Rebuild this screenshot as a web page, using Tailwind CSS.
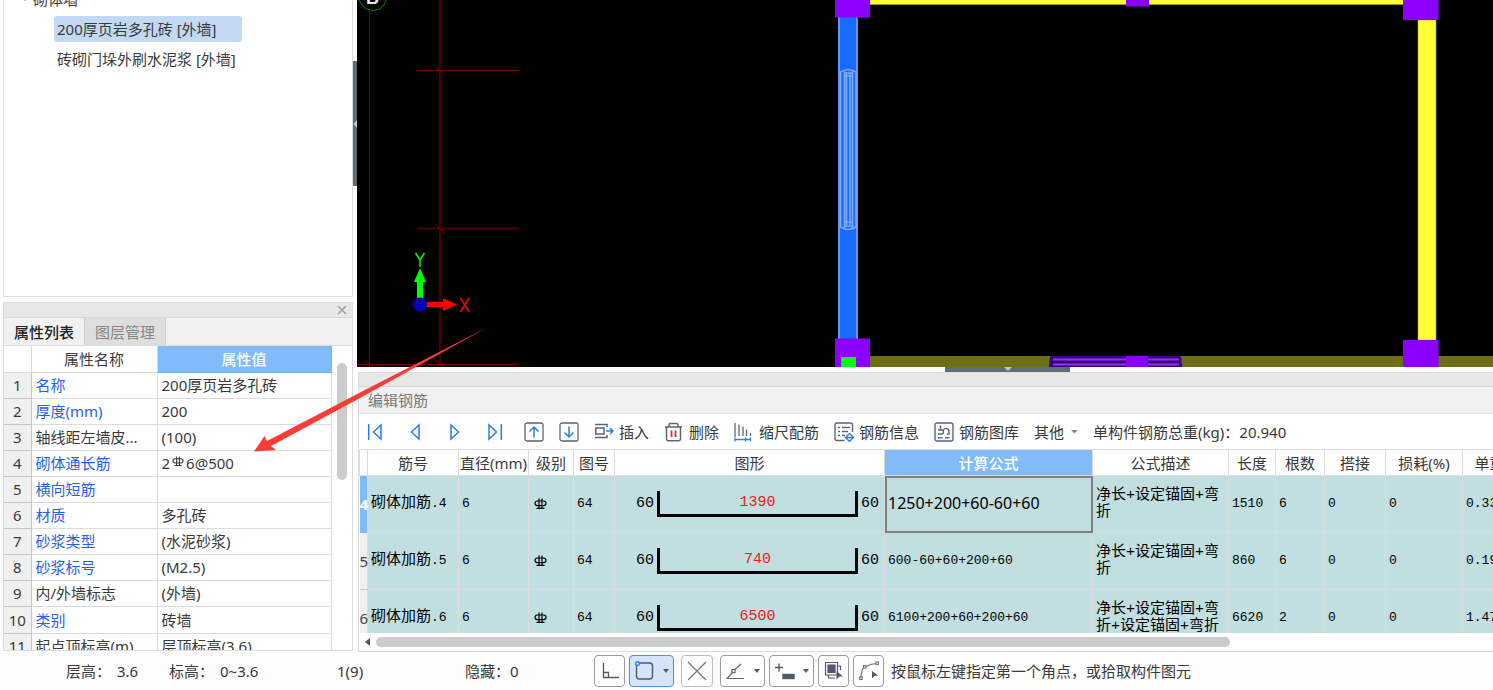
<!DOCTYPE html>
<html lang="zh-CN">
<head>
<meta charset="utf-8">
<title>编辑钢筋</title>
<script src="https://cdn.jsdelivr.net/npm/@tailwindcss/browser@4"></script>
</head>
<body class="relative flex h-screen flex-col overflow-hidden bg-white font-['Noto_Sans','Noto_Sans_CJK_SC',sans-serif] text-[15px] leading-5 text-[#3a3a3a]">

<svg class="hidden">
  <symbol id="rebar" viewBox="0 0 13 12">
    <g fill="none" stroke="currentColor" stroke-width="1.2">
      <path d="M6.500 3H3.400Q1 3 1 5.300Q1 7.600 3.400 7.600H9.600Q12 7.600 12 5.300Q12 3 9.600 3Z"/>
      <path d="M5 .5V10.400M8 .5V10.400M2.500 10.400H10.500"/>
    </g>
  </symbol>
</svg>

<main class="flex min-h-0 flex-1">
  <aside class="flex w-[353px] shrink-0 flex-col gap-[5px] pb-px pl-[3px]">
    <nav class="min-h-0 flex-1 overflow-hidden border border-t-0 border-[#dedede]">
      <ul class="-mt-4 whitespace-nowrap">
        <li class="flex h-[30px] items-center gap-1 pl-[17px]">
          <svg class="h-2 w-2" viewBox="0 0 8 8"><path d="M1 2H7L4 6Z" fill="#555"/></svg>砌体墙
        </li>
        <li class="flex h-[30px] items-center pl-[50px]">
          <a href="#" class="h-[26px] w-[188px] rounded-[3px] bg-[#c1d9f2] pl-[3px] leading-[26px]">200厚页岩多孔砖 [外墙]</a>
        </li>
        <li class="flex h-[30px] items-center pl-[53px]"><a href="#">砖砌门垛外刷水泥浆 [外墙]</a></li>
      </ul>
    </nav>

    <section class="flex h-[349px] shrink-0 flex-col overflow-hidden border border-[#dcdcdc]">
      <div class="flex h-[15px] shrink-0 items-center justify-end border-b border-[#d8d8d8] bg-[#e7e7e7] pr-[5px]">
        <button aria-label="关闭" class="block"><svg class="h-[10px] w-[10px]" viewBox="0 0 10 10"><path d="M1 1L9 9M9 1L1 9" stroke="#9a9a9a" stroke-width="1.200" fill="none"/></svg></button>
      </div>
      <div class="flex h-7 shrink-0 border-b border-[#dcdcdc] bg-[#f1f1f1]">
        <button class="w-[80px] font-medium text-[#222]">属性列表</button>
        <button class="w-[82px] border-x border-[#c9ced4] bg-[#dedede] text-[#858585]">图层管理</button>
      </div>
      <div class="flex min-h-0 flex-1 overflow-hidden">
        <table class="w-[327px] shrink-0 table-fixed self-start border-collapse whitespace-nowrap">
          <colgroup><col class="w-[27px]"><col class="w-[126px]"><col class="w-[174px]"></colgroup>
          <thead>
            <tr class="h-[26px]"><th class="border-r border-b border-[#d8d8d8]"></th><th class="border-r border-b border-[#d8d8d8] font-normal">属性名称</th><th class="border border-t-0 border-[#74b2f4] bg-[#80bbfb] font-medium text-white">属性值</th></tr>
          </thead>
          <tbody class="[&_td]:border [&_td]:border-[#dcdcdc] [&_td]:py-0 [&_td]:pl-1 [&_th]:border-r [&_th]:border-b [&_th]:border-[#c6c6c6] [&_th]:bg-[#f0f0f0] [&_th]:p-0 [&_th]:font-normal [&_tr]:h-[26px]">
            <tr><th>1</th><td class="text-[#1f62f5]">名称</td><td>200厚页岩多孔砖</td></tr>
            <tr><th>2</th><td class="text-[#1f62f5]">厚度(mm)</td><td>200</td></tr>
            <tr><th>3</th><td>轴线距左墙皮...</td><td>(100)</td></tr>
            <tr><th>4</th><td class="text-[#1f62f5]">砌体通长筋</td><td>2<svg class="mx-[2px] mb-[6px] inline h-[11px] w-3" role="img" aria-label="三级钢"><use href="#rebar"/></svg>6@500</td></tr>
            <tr><th>5</th><td class="text-[#1f62f5]">横向短筋</td><td></td></tr>
            <tr><th>6</th><td class="text-[#1f62f5]">材质</td><td>多孔砖</td></tr>
            <tr><th>7</th><td class="text-[#1f62f5]">砂浆类型</td><td>(水泥砂浆)</td></tr>
            <tr><th>8</th><td class="text-[#1f62f5]">砂浆标号</td><td>(M2.5)</td></tr>
            <tr><th>9</th><td>内/外墙标志</td><td>(外墙)</td></tr>
            <tr class="h-[27px]!"><th>10</th><td class="text-[#1f62f5]">类别</td><td>砖墙</td></tr>
            <tr><th>11</th><td>起点顶标高(m)</td><td>层顶标高(3.6)</td></tr>
          </tbody>
        </table>
        <div class="flex flex-1 justify-center pt-[17px]"><div class="h-[117px] w-[10px] rounded-full bg-[#cccccc]"></div></div>
      </div>
    </section>
  </aside>

  <div class="relative w-1 shrink-0">
    <button aria-label="收起左侧面板" class="absolute top-[61px] left-0 flex h-[125px] w-1 items-center bg-[#5f6b77]">
      <svg class="h-2 w-1" viewBox="0 0 4 8"><path d="M4 0V8L0.500 4Z" fill="#c4c8cc"/></svg>
    </button>
  </div>

  <div class="flex min-w-0 flex-1 flex-col">
    <div class="relative min-h-0 flex-1 overflow-hidden bg-black">
      <svg class="absolute inset-0 h-full w-full" viewBox="357 0 1136 367" preserveAspectRatio="xMinYMin slice" role="img" aria-label="墙体平面图">
        <!-- dimension lines -->
        <g stroke="#7a0000" fill="none">
          <path d="M369.500 11V367M418 70.500H519M357 364.500H519"/>
          <path d="M418 228.500H519" stroke="#500000" stroke-width="2"/>
          <path d="M440 0V364" stroke="#4a0000" stroke-width="2"/>
          <path d="M435 66L445 75M435 224L445 233M435 360L445 368M365 360L374 368" stroke="#8a0000"/>
        </g>
        <path d="M359 0L362 5L367 9L373 10.500L380 9L384 5L386 0" fill="none" stroke="#008a00"/>
        <text x="366" y="4" fill="#e8e8e8" font-size="18" font-weight="bold" font-family="Liberation Sans">B</text>
        <!-- coordinate axes -->
        <path d="M417 300V282H414L420 268L426 282H423V300Z" fill="#00ff00"/>
        <path d="M425 302H443V298L457 304.500L443 311V307H425Z" fill="#ff0000"/>
        <circle cx="420" cy="304.500" r="7" fill="#0000c0"/>
        <path d="M415.500 253L420 260L424.500 253M420 260V267" fill="none" stroke="#00ff00" stroke-width="1.500"/>
        <path d="M460.500 298L469 312M469 298L460.500 312" fill="none" stroke="#ff0000" stroke-width="1.500"/>
        <!-- yellow walls -->
        <path d="M870 -3H1404V4.500H870ZM1418 20H1436V340H1418Z" fill="#ffff37" stroke="#a8a820" stroke-width=".6"/>
        <path d="M870 356H1493V367H870Z" fill="#6e6e16"/>
        <!-- selected wall and its window -->
        <path d="M838 17H858V339H838Z" fill="#176bff"/>
        <path d="M839 17V339M857 17V339" stroke="#7aa6f5" stroke-width="1.500"/>
        <g fill="none" stroke="#7fa9ff" stroke-width="1.600">
          <path d="M840.500 72Q848 67 856 72V227Q848 232 840.500 227Z"/>
          <path d="M844.500 71V228M852.500 71V228M846.500 73V226M850 73V226M845 76H852M845 73H852M845 222H852M845 226H852"/>
        </g>
        <!-- window in the lower wall -->
        <path d="M1050 356H1181L1182 367H1049Z" fill="#3a0080"/>
        <path d="M1053 359.500H1179M1053 364.500H1179" stroke="#9234ee" stroke-width="2"/>
        <!-- columns -->
        <path d="M835 0H870V17.500H835ZM835 338.500H870V367H835ZM1403 0H1438.500V20H1403ZM1403 340H1438.500V367H1403ZM1126 0H1149V6.500H1126ZM1126 356H1148V367H1126Z" fill="#8c00ff"/>
        <path d="M841 357H856V367H841Z" fill="#00ff00"/>
      </svg>
    </div>

    <div class="flex h-[5px] shrink-0">
      <button aria-label="收起下方面板" class="ml-[588px] flex h-[5px] w-[125px] justify-center bg-[#5f6b77]">
        <svg class="h-1 w-2" viewBox="0 0 8 4"><path d="M0 0H8L4 4Z" fill="#c4c8cc"/></svg>
      </button>
    </div>

    <section class="ml-px flex h-[280px] shrink-0 flex-col overflow-hidden border border-r-0 border-[#dcdcdc]">
      <div class="h-[14px] shrink-0 border-b border-[#d8d8d8] bg-[#e7e7e7]"></div>
      <h2 class="h-[27px] shrink-0 border-b border-[#e2e2e2] bg-[#f1f1f1] pl-[9px] leading-[26px] text-[#7a7a7a]">编辑钢筋</h2>
      <div class="flex h-[35px] shrink-0 items-center gap-[15px] whitespace-nowrap">
        <div class="-mr-0.5 flex gap-2 text-[#2b7de9] [&>button]:flex [&>button]:w-8 [&>button]:justify-center [&_svg]:h-5 [&_svg]:w-5">
          <button aria-label="首条"><svg viewBox="0 0 20 20" fill="none" stroke="currentColor" stroke-width="1.500"><path d="M3.700 2V18M16 3V17L8.500 10Z"/></svg></button>
          <button aria-label="上一条"><svg viewBox="0 0 20 20" fill="none" stroke="currentColor" stroke-width="1.500"><path d="M14 3V17L6.500 10Z"/></svg></button>
          <button aria-label="下一条"><svg viewBox="0 0 20 20" fill="none" stroke="currentColor" stroke-width="1.500"><path d="M6 3V17L13.500 10Z"/></svg></button>
          <button aria-label="末条"><svg viewBox="0 0 20 20" fill="none" stroke="currentColor" stroke-width="1.500"><path d="M16.300 2V18M4 3V17L11.500 10Z"/></svg></button>
        </div>
        <button aria-label="上移"><svg class="h-5 w-5" viewBox="0 0 20 20" fill="none"><rect x="1" y="1" width="18" height="18" rx="2" stroke="#5b6579" stroke-width="1.300"/><path d="M10 15.500V5.500M5.500 9.500L10 5L14.500 9.500" stroke="#2b7de9" stroke-width="1.500"/></svg></button>
        <button aria-label="下移"><svg class="h-5 w-5" viewBox="0 0 20 20" fill="none"><rect x="1" y="1" width="18" height="18" rx="2" stroke="#5b6579" stroke-width="1.300"/><path d="M10 4.500V14.500M5.500 10.500L10 15L14.500 10.500" stroke="#2b7de9" stroke-width="1.500"/></svg></button>
        <button class="flex items-center gap-[5px]"><svg class="h-5 w-5" viewBox="0 0 20 20" fill="none" stroke="#5b6579" stroke-width="1.500"><path d="M1 2.500H13V5M1 15.500H13V13M1.800 6H10V12H1.800Z"/><path d="M12 9H19M16 6L19 9L16 12" stroke="#2b7de9"/></svg>插入</button>
        <button class="flex items-center gap-[5px]"><svg class="h-5 w-5" viewBox="0 0 20 20" fill="none" stroke="#5b6579" stroke-width="1.500"><path d="M1 5H18M5 5V3Q5 1.500 6.500 1.500H12.500Q14 1.500 14 3V5M2.500 5V17Q2.500 18.700 4.200 18.700H14.800Q16.500 18.700 16.500 17V5"/><path d="M7.500 8.500V15M11.500 8.500V15" stroke="#e02b35" stroke-width="1.800"/></svg>删除</button>
        <button class="flex items-center gap-[5px]"><svg class="h-5 w-5" viewBox="0 0 20 20" fill="none" stroke="#5b6579" stroke-width="1.300"><path d="M1 1V15M5 2.500V14M9 4.500V14M12.500 7.500V14M16.500 11V14"/><path d="M1 17.500H17M1 15.500V19.500M11.500 15.500V19.500M16.500 15.500V19.500" stroke="#2b7de9"/></svg>缩尺配筋</button>
        <button class="flex items-center gap-[5px]"><svg class="h-5 w-5" viewBox="0 0 20 20" fill="none" stroke="#5b6579" stroke-width="1.400"><path d="M10.500 18.500H3Q1 18.500 1 16.500V3Q1 1 3 1H16.500Q18.500 1 18.500 3V10M4 5.500H6M8 5.500H16M4 9.500H6M8 9.500H14M4 13.500H6M8 13.500H11"/><path d="M11.500 15.500H19.500M15.500 11.500L11.500 15.500L15.500 19.500M15.500 11.500L19.500 15.500L15.500 19.500" stroke="#2b7de9"/></svg>钢筋信息</button>
        <button class="flex items-center gap-[5px]"><svg class="h-5 w-5" viewBox="0 0 20 20" fill="none" stroke="#5b6579" stroke-width="1.400"><rect x="1" y="1" width="18" height="18" rx="2"/><path d="M6.500 3.500V8M4 8H7.500Q9.500 8 9.500 10Q9.500 12 7.500 12H4M9.500 8Q10.500 6 12.500 6.500Q15 7 15 9.500V12H13"/><path d="M4 15.800H8.500M11 15.800H15.500" stroke="#2b7de9"/></svg>钢筋图库</button>
        <button class="flex items-center gap-[7px]">其他<svg class="h-[7px] w-[7px]" viewBox="0 0 7 7"><path d="M0 2H7L3.500 5.500Z" fill="#8a8a8a"/></svg></button>
        <span>单构件钢筋总重(kg)：20.940</span>
      </div>

      <div class="min-h-0 flex-1 overflow-hidden">
        <table class="w-[1183px] table-fixed border-collapse whitespace-nowrap">
          <colgroup><col class="w-[8px]"><col class="w-[91px]"><col class="w-[70px]"><col class="w-[45px]"><col class="w-[41px]"><col class="w-[270px]"><col class="w-[208px]"><col class="w-[136px]"><col class="w-[47px]"><col class="w-[49px]"><col class="w-[61px]"><col class="w-[77px]"><col class="w-[80px]"></colgroup>
          <thead>
            <tr class="h-[26px] [&>th]:border [&>th]:border-[#dcdcdc] [&>th]:p-0 [&>th]:font-normal">
              <th></th><th>筋号</th><th>直径(mm)</th><th>级别</th><th>图号</th><th>图形</th>
              <th class="bg-[#80bbfb] text-white"><span class="font-medium">计算公式</span></th>
              <th>公式描述</th><th>长度</th><th>根数</th><th>搭接</th><th>损耗(%)</th><th>单重(kg)</th>
            </tr>
          </thead>
          <tbody class="bg-[#c1dfe0] font-['Liberation_Mono','Noto_Sans_CJK_SC',monospace] text-[13px] text-black [&_td]:border [&_td]:border-[#dcdcdc] [&_td]:py-0 [&_td]:pr-0 [&_td]:pl-[3px] [&>tr]:h-[57px]">
            <tr>
              <th class="bg-[#80bbfb] p-0 font-['Noto_Sans'] text-[15px] font-bold text-white">4</th>
              <td><span class="text-[15px]">砌体加筋</span>.4</td><td>6</td>
              <td><svg class="ml-[2px] h-3 w-[13px]" role="img" aria-label="三级钢"><use href="#rebar"/></svg></td><td>64</td>
              <td><div class="flex items-center gap-[3px] pl-[18px] text-[15px]"><span>60</span><div class="h-[26px] w-[201px] border-3 border-t-0 border-black text-center leading-6 text-[#f01818]">1390</div><span>60</span></div></td>
              <td class="outline-2 -outline-offset-2 outline-[#808080]"><input aria-label="计算公式" class="w-full bg-transparent font-['Noto_Sans'] text-[16px] outline-none" value="1250+200+60-60+60"></td>
              <td class="text-[15px] leading-[17px] whitespace-normal">净长+设定锚固+弯折</td>
              <td>1510</td><td>6</td><td>0</td><td>0</td><td>0.335</td>
            </tr>
            <tr>
              <th class="border-b border-[#c6c6c6] bg-[#f0f0f0] p-0 font-['Noto_Sans'] text-[15px] font-normal text-[#444]">5</th>
              <td><span class="text-[15px]">砌体加筋</span>.5</td><td>6</td>
              <td><svg class="ml-[2px] h-3 w-[13px]" role="img" aria-label="三级钢"><use href="#rebar"/></svg></td><td>64</td>
              <td><div class="flex items-center gap-[3px] pl-[18px] text-[15px]"><span>60</span><div class="h-[26px] w-[201px] border-3 border-t-0 border-black text-center leading-6 text-[#f01818]">740</div><span>60</span></div></td>
              <td>600-60+60+200+60</td>
              <td class="text-[15px] leading-[17px] whitespace-normal">净长+设定锚固+弯折</td>
              <td>860</td><td>6</td><td>0</td><td>0</td><td>0.191</td>
            </tr>
            <tr>
              <th class="bg-[#f0f0f0] p-0 font-['Noto_Sans'] text-[15px] font-normal text-[#444]">6</th>
              <td><span class="text-[15px]">砌体加筋</span>.6</td><td>6</td>
              <td><svg class="ml-[2px] h-3 w-[13px]" role="img" aria-label="三级钢"><use href="#rebar"/></svg></td><td>64</td>
              <td><div class="flex items-center gap-[3px] pl-[18px] text-[15px]"><span>60</span><div class="h-[26px] w-[201px] border-3 border-t-0 border-black text-center leading-6 text-[#f01818]">6500</div><span>60</span></div></td>
              <td>6100+200+60+200+60</td>
              <td class="text-[15px] leading-[17px] whitespace-normal">净长+设定锚固+弯折+设定锚固+弯折</td>
              <td>6620</td><td>2</td><td>0</td><td>0</td><td>1.470</td>
            </tr>
          </tbody>
        </table>
      </div>
      <div class="flex h-[18px] shrink-0 items-center gap-[6px] pl-[6px]">
        <button aria-label="向左滚动"><svg class="h-2 w-[5px]" viewBox="0 0 5 8"><path d="M5 0V8L0 4Z" fill="#4f5968"/></svg></button>
        <div class="h-[10px] w-[854px] rounded-full bg-[#cbcbcb]"></div>
      </div>
    </section>
  </div>
</main>

<footer class="flex h-[38px] shrink-0 items-center bg-[#fcfcfc] pl-[66px] whitespace-nowrap">
  <span class="w-[51px]">层高：</span><span class="w-[52px]">3.6</span>
  <span class="w-[51px]">标高：</span><span class="w-[117px]">0~3.6</span>
  <span class="w-[128px]">1(9)</span>
  <span class="w-[45px]">隐藏：</span><span class="w-[84px]">0</span>
  <div class="flex items-center gap-1 [&_svg]:shrink-0 [&>button]:flex [&>button]:h-8 [&>button]:items-center [&>button]:justify-center [&>button]:rounded-[4px] [&>button]:border [&>button]:border-[#9c9c9c] [&>button]:bg-white">
    <button aria-label="正交" class="w-[31px]"><svg class="h-5 w-5" viewBox="0 0 20 20" fill="none" stroke="#4f5968" stroke-width="1.300"><path d="M3.500 2V16.500H19M3.500 11.500H8.500V16.500"/></svg></button>
    <button aria-label="矩形" class="w-[45px] gap-2 border-[#4a90e8]! bg-[#d5e4fb]!"><svg class="h-5 w-5" viewBox="0 0 20 20" fill="none" stroke="#4f5968" stroke-width="1.400"><rect x="1.500" y="2" width="16" height="16" rx="3"/><circle cx="2.500" cy="2.500" r="1.800" fill="#fff" stroke="#2b7de9"/></svg><svg class="h-[6px] w-[6px]" viewBox="0 0 6 6"><path d="M0 1H6L3 5Z" fill="#4f5968"/></svg></button>
    <button aria-label="交点" class="mx-[3px] w-8 border-[#bdbdbd]!"><svg class="h-5 w-5" viewBox="0 0 20 20" fill="none" stroke="#777" stroke-width="1.200"><path d="M1 1L19 19M19 1L1 19"/></svg></button>
    <button aria-label="角度" class="w-[45px] gap-2"><svg class="h-5 w-5" viewBox="0 0 20 20" fill="none" stroke="#666" stroke-width="1.200"><path d="M15 3L9 8.500M7 11L1 17.500H18"/><rect x="6" y="8.500" width="3" height="3"/></svg><svg class="h-[6px] w-[6px]" viewBox="0 0 6 6"><path d="M0 1H6L3 5Z" fill="#4f5968"/></svg></button>
    <button aria-label="偏移" class="w-[45px] gap-2"><svg class="h-5 w-5" viewBox="0 0 20 20" fill="none" stroke="#4f5968" stroke-width="1.400"><path d="M0 6.500H8M4 2.500V10.500"/><rect x="8" y="13.500" width="11" height="4" fill="#4f5968"/></svg><svg class="h-[6px] w-[6px]" viewBox="0 0 6 6"><path d="M0 1H6L3 5Z" fill="#4f5968"/></svg></button>
    <button aria-label="复制" class="w-[31px]"><svg class="h-5 w-5" viewBox="0 0 20 20" fill="none" stroke="#4f5968" stroke-width="1.200"><path d="M1.500 1.500H13.500V14H1.500Z"/><path d="M4 4H11V11.500H4Z" fill="#4f5968"/><path d="M13.500 5H16.500V9M4.500 14V17H11"/><path d="M12.500 10L19 15.500H15.500L12.500 18.500Z" fill="#4f5968" stroke="none"/></svg></button>
    <button aria-label="弧线" class="w-[31px]"><svg class="h-5 w-5" viewBox="0 0 20 20" fill="none" stroke="#777" stroke-width="1.200"><path d="M2 16Q2.500 8 5 6.500M7 5.500Q11 3 17 2.500"/><rect x="4.500" y="4.500" width="2.500" height="2.500"/><rect x="17" y="1" width="2.500" height="2.500"/><rect x=".7" y="16" width="2.500" height="2.500"/><path d="M13 10L19 14.500L15.500 15L13 17.500Z" fill="#4f5968" stroke="none"/></svg></button>
  </div>
  <span class="pl-[7px]">按鼠标左键指定第一个角点，或拾取构件图元</span>
</footer>

<!-- callout arrow -->
<svg class="pointer-events-none absolute top-[320px] left-[250px] h-[140px] w-[245px]" viewBox="250 320 245 140"><path d="M254 451.500L264.500 436L267 441L360 392.500L488 327L360 398L271 446L276 450Z" fill="#fb3b36"/></svg>
</body>
</html>
